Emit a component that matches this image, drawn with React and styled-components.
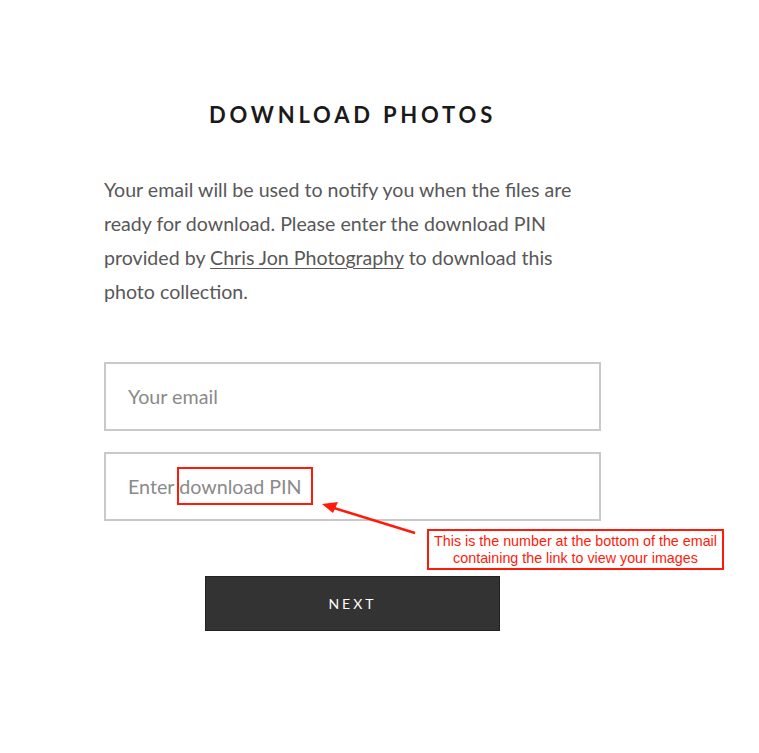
import React from 'react'
import styled, { createGlobalStyle } from 'styled-components'

const GlobalStyle = createGlobalStyle`
  html, body {
    margin: 0;
    padding: 0;
    background: #ffffff;
  }
  body {
    font-family: Lato, 'Open Sans', sans-serif;
  }
`

const Page = styled.div`
  position: relative;
  width: 759px;
  height: 753px;
  background: #ffffff;
  overflow: hidden;
`

const Column = styled.div`
  width: 497px;
  margin-left: 104px;
  padding-top: 100px;
  display: flex;
  flex-direction: column;
`

const Title = styled.h1`
  margin: 0;
  text-align: center;
  font-family: Lato, sans-serif;
  font-weight: 700;
  font-size: 22px;
  line-height: 30px;
  letter-spacing: 3.8px;
  color: #1a1a1a;
`

const Intro = styled.p`
  margin: 43px 0 0;
  max-width: 478px;
  font-family: Lato, sans-serif;
  font-size: 19.6px;
  line-height: 34px;
  color: #585858;

  a {
    color: #585858;
    text-decoration: underline;
    text-underline-offset: 3px;
  }
`

const Form = styled.form`
  margin-top: 53px;
  display: flex;
  flex-direction: column;
  gap: 21px;
`

const Field = styled.input`
  box-sizing: border-box;
  width: 497px;
  height: 69px;
  padding: 0 22px;
  border: 2px solid #c9c9c9;
  border-radius: 0;
  outline: none;
  background: #ffffff;
  font-family: Lato, sans-serif;
  font-size: 19.7px;
  color: #333333;

  &::placeholder {
    color: #8a8a8a;
  }
`

const Button = styled.button`
  align-self: center;
  margin-top: 34px;
  width: 295px;
  height: 55px;
  border: 1px solid #222222;
  background: #333333;
  color: #ffffff;
  font-family: Lato, sans-serif;
  font-size: 14px;
  letter-spacing: 3px;
  cursor: pointer;
`

const Highlight = styled.div`
  position: absolute;
  left: 177px;
  top: 467px;
  width: 136px;
  height: 38px;
  box-sizing: border-box;
  border: 2px solid #ff1a0a;
`

const Callout = styled.div`
  position: absolute;
  left: 427px;
  top: 529px;
  width: 297px;
  height: 41px;
  box-sizing: border-box;
  border: 2px solid #ff1a0a;
  display: flex;
  align-items: center;
  justify-content: center;
  text-align: center;
  font-family: 'Liberation Sans', Arial, sans-serif;
  font-size: 14.3px;
  line-height: 17px;
  color: #ff1a0a;
  white-space: nowrap;
`

const Arrow = styled.svg`
  position: absolute;
  left: 0;
  top: 0;
  pointer-events: none;
`

export default function App() {
  return (
    <Page>
      <GlobalStyle />
      <Column>
        <Title>DOWNLOAD PHOTOS</Title>
        <Intro>
          Your email will be used to notify you when the files are ready for
          download. Please enter the download PIN provided by{' '}
          <a href="#">Chris Jon Photography</a> to download this photo
          collection.
        </Intro>
        <Form onSubmit={(e) => e.preventDefault()}>
          <Field type="email" placeholder="Your email" />
          <Field type="text" placeholder="Enter download PIN" />
          <Button type="submit">NEXT</Button>
        </Form>
      </Column>
      <Highlight />
      <Arrow width="759" height="753">
        <line x1="415" y1="533" x2="334" y2="508" stroke="#ff1a0a" strokeWidth="2.5" />
        <polygon points="322,504 338,502 333,513" fill="#ff1a0a" />
      </Arrow>
      <Callout>
        This is the number at the bottom of the email
        <br />
        containing the link to view your images
      </Callout>
    </Page>
  )
}
